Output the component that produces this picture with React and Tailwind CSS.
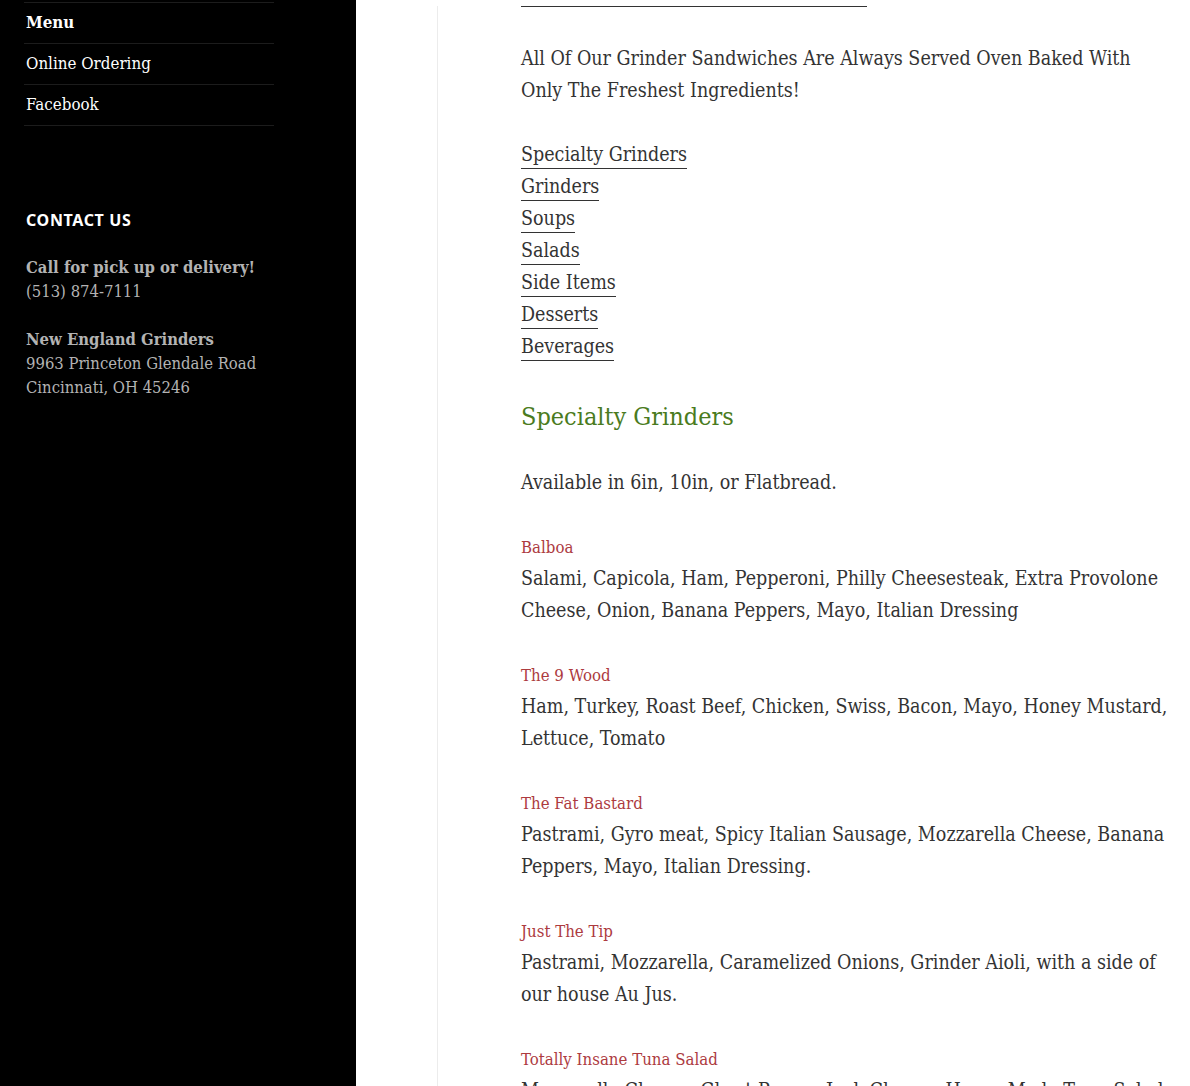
const serif = "font-['DejaVu_Serif_Condensed','DejaVu_Serif',serif]";

const links = ['Specialty Grinders', 'Grinders', 'Soups', 'Salads', 'Side Items', 'Desserts', 'Beverages'];

const items = [
  { name: 'Balboa', desc: 'Salami, Capicola, Ham, Pepperoni, Philly Cheesesteak, Extra Provolone Cheese, Onion, Banana Peppers, Mayo, Italian Dressing' },
  { name: 'The 9 Wood', desc: 'Ham, Turkey, Roast Beef, Chicken, Swiss, Bacon, Mayo, Honey Mustard, Lettuce, Tomato' },
  { name: 'The Fat Bastard', desc: 'Pastrami, Gyro meat, Spicy Italian Sausage, Mozzarella Cheese, Banana Peppers, Mayo, Italian Dressing.' },
  { name: 'Just The Tip', desc: 'Pastrami, Mozzarella, Caramelized Onions, Grinder Aioli, with a side of our house Au Jus.' },
  { name: 'Totally Insane Tuna Salad', desc: 'Mozzarella Cheese, Ghost Pepper Jack Cheese, House Made Tuna Salad, Lettuce, Tomato, Onion, Mayo' },
];

export default function App() {
  return (
    <div className={`flex h-[1086px] w-[1190px] overflow-hidden bg-white ${serif}`}>
      {/* Sidebar */}
      <aside className="w-[356px] shrink-0 bg-black">
        <div className="ml-[24px] w-[250px] pt-[2px]">
          <ul className="border-t border-[#1c1c1c] text-[16.8px] text-white">
            <li className="flex h-[41px] items-center border-b border-[#1c1c1c] pl-[2px] font-bold">Menu</li>
            <li className="flex h-[41px] items-center border-b border-[#1c1c1c] pl-[2px]">Online Ordering</li>
            <li className="flex h-[41px] items-center border-b border-[#1c1c1c] pl-[2px]">Facebook</li>
          </ul>

          <div className="mt-[82px] pl-[2px]">
            <h2 className="font-['Noto_Sans',sans-serif] text-[16px] font-bold uppercase leading-[24px] tracking-[0.04em] text-white">Contact Us</h2>
            <div className="mt-[24px] w-[260px] text-[16.5px] leading-[24px] text-[#b3b3b3]">
              <p className="mb-[24px]">
                <strong>Call for pick up or delivery!</strong><br />
                (513) 874-7111
              </p>
              <p>
                <strong>New England Grinders</strong><br />
                9963 Princeton Glendale Road<br />
                Cincinnati, OH 45246
              </p>
            </div>
          </div>
        </div>
      </aside>

      {/* Main */}
      <main className="flex-1 pl-[81px]">
        <article className="h-full border-l border-[#ececec] pl-[83px] text-[#333333]">
          <div className="w-[651px]">
            <div className="mt-[6px] h-px w-[346px] bg-[#333333]" />

            <p className="mt-[36px] text-[19.5px] leading-[32px]">
              All Of Our Grinder Sandwiches Are Always Served Oven Baked With Only The Freshest Ingredients!
            </p>

            <div className="mt-[32px] text-[19.5px] leading-[32px]">
              {links.map((l) => (
                <div key={l}>
                  <span className="border-b border-[#333333] pb-[2px]">{l}</span>
                </div>
              ))}
            </div>

            <h2 className="mt-[37px] text-[25px] leading-[34px] text-[#4a7b20]">Specialty Grinders</h2>

            <p className="mt-[33px] text-[19.5px] leading-[32px]">Available in 6in, 10in, or Flatbread.</p>

            {items.map((it) => (
              <p key={it.name} className="mt-[32px] text-[19.5px] leading-[32px]">
                <span className="text-[16.7px] text-[#ad3b3f]">{it.name}</span>
                <br />
                {it.desc}
              </p>
            ))}
          </div>
        </article>
      </main>
    </div>
  );
}
